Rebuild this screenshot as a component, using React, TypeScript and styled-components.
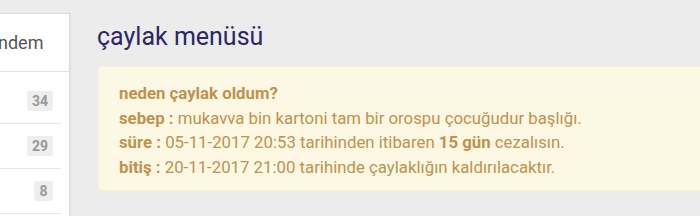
import styled, { createGlobalStyle } from "styled-components";

const GlobalStyle = createGlobalStyle`
  html, body {
    margin: 0;
    padding: 0;
    background: #ececec;
    overflow: hidden;
  }
  body {
    font-family: Roboto, "Noto Sans", "Liberation Sans", sans-serif;
  }
`;

const counts = [34, 29, 8];

function App() {
  return (
    <Page>
      <GlobalStyle />
      <Sidebar>
        <SideHeader>gündem</SideHeader>
        <TopicList>
          {counts.map((c, i) => (
            <TopicRow key={i}>
              <Badge>{c}</Badge>
            </TopicRow>
          ))}
        </TopicList>
      </Sidebar>
      <Main>
        <Title>çaylak menüsü</Title>
        <Alert>
          <Line>
            <b>neden çaylak oldum?</b>
          </Line>
          <Line>
            <b>sebep :</b> mukavva bin kartoni tam bir orospu çocuğudur başlığı.
          </Line>
          <Line>
            <b>süre :</b> 05-11-2017 20:53 tarihinden itibaren <b>15 gün</b> cezalısın.
          </Line>
          <Line>
            <b>bitiş :</b> 20-11-2017 21:00 tarihinde çaylaklığın kaldırılacaktır.
          </Line>
        </Alert>
      </Main>
    </Page>
  );
}

export default App;

const Page = styled.div`
  display: flex;
  align-items: flex-start;
  width: 700px;
  height: 216px;
  overflow: hidden;
`;

const Sidebar = styled.div`
  flex: 0 0 auto;
  width: 100px;
  margin-left: -31px;
  margin-top: 13px;
  height: 260px;
  background: #fff;
  border-top: 1px solid #dedede;
  border-right: 1px solid #dcdcdc;
  box-shadow: 1px 0 1px rgba(0, 0, 0, 0.04);
`;

const SideHeader = styled.div`
  height: 57px;
  display: flex;
  align-items: center;
  padding-left: 9px;
  font-size: 18px;
  color: #555;
  border-bottom: 1px solid #e2e2e2;
`;

const TopicList = styled.div`
  padding: 7px 8px 0 0;
`;

const TopicRow = styled.div`
  height: 44px;
  display: flex;
  align-items: center;
  justify-content: flex-end;
  padding-right: 8px;
  border-bottom: 1px solid #e6e6e6;
`;

const Badge = styled.span`
  display: inline-block;
  min-width: 9px;
  height: 20px;
  line-height: 20px;
  padding: 0 5px;
  background: #eeeeee;
  color: #999;
  font-size: 14px;
  font-weight: 700;
  text-align: center;
  border-radius: 2px;
`;

const Main = styled.div`
  flex: 0 0 auto;
  width: 640px;
  margin-left: 27px;
  padding-top: 22px;
`;

const Title = styled.h1`
  margin: 0 0 14px;
  font-size: 25px;
  font-weight: 400;
  line-height: 30px;
  color: #2b2766;
`;

const Alert = styled.div`
  margin-left: 1px;
  padding: 14px 20px 11px;
  background: #fcf8e3;
  border: 1px solid #faf0d2;
  border-radius: 4px;
  color: #c0924f;
  font-size: 16.8px;
  line-height: 24.5px;
`;

const Line = styled.div`
  b {
    font-weight: 700;
  }
`;
